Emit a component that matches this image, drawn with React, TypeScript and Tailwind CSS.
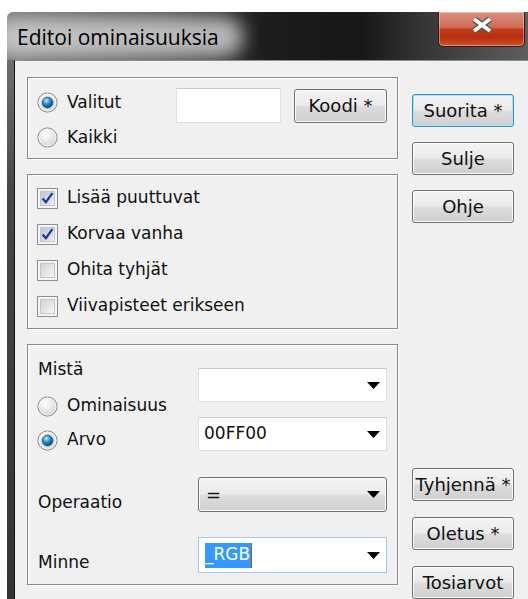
import type { ReactNode } from 'react';

// Windows 7 style "Editoi ominaisuuksia" dialog

const Radio = ({ id, checked }: { id: string; checked?: boolean }) => (
    <svg width="21" height="21" viewBox="0 0 21 21" className="shrink-0">
        <defs>
            <radialGradient id={`${id}-bg`} cx="40%" cy="35%" r="70%">
                <stop offset="0" stopColor="#ffffff" />
                <stop offset="1" stopColor="#d2d2d2" />
            </radialGradient>
            <radialGradient id={`${id}-dot`} cx="40%" cy="32%" r="70%">
                <stop offset="0" stopColor="#c4f0ff" />
                <stop offset="0.45" stopColor="#2a93da" />
                <stop offset="1" stopColor="#0a3d75" />
            </radialGradient>
        </defs>
        <circle cx="10.5" cy="10.5" r="9.6" fill={`url(#${id}-bg)`} stroke="#8a8a8a" />
        <circle cx="10.5" cy="10.5" r="8.4" fill="none" stroke="#f6f6f6" />
        {checked && <circle cx="10.5" cy="10.5" r="5.4" fill={`url(#${id}-dot)`} stroke="#1c4c77" strokeWidth="0.8" />}
    </svg>
);

const Checkbox = ({ id, checked }: { id: string; checked?: boolean }) => (
    <svg width="21" height="21" viewBox="0 0 21 21" className="shrink-0">
        <defs>
            <linearGradient id={`${id}-in`} x1="0" y1="0" x2="1" y2="1">
                <stop offset="0" stopColor={checked ? '#b9c3d3' : '#d0d0d0'} />
                <stop offset="1" stopColor={checked ? '#eef1f6' : '#f8f8f8'} />
            </linearGradient>
        </defs>
        <rect x="0.5" y="0.5" width="20" height="20" fill="#f5f5f5" stroke="#8e8f8f" />
        <rect x="3.5" y="3.5" width="14" height="14" fill={`url(#${id}-in)`} stroke="#c2c4c8" />
        {checked && <path d="M5.6 10.4 L8.9 14.2 L15.4 5.2" fill="none" stroke="#22398a" strokeWidth="2.3" />}
    </svg>
);

const Arrow = () => (
    <svg width="13" height="7" viewBox="0 0 13 7" className="shrink-0">
        <polygon points="0,0 13,0 6.5,7" fill="#000" />
    </svg>
);

const WinButton = ({ label, isDefault = false }: { label: string; isDefault?: boolean }) => (
    <button
        type="button"
        className={`flex h-[33px] w-[102px] items-center justify-center whitespace-nowrap rounded-[3px] border bg-[linear-gradient(180deg,#f3f3f3_0%,#ebebeb_48%,#dddddd_52%,#cfcfcf_100%)] text-[18px] leading-none text-[#111] ${
            isDefault ? 'border-[#3c8fc4] shadow-[inset_0_0_0_1px_#a6e3f9]' : 'border-[#707070] shadow-[inset_0_0_0_1px_#fbfbfb]'
        }`}
    >
        {label}
    </button>
);

const Group = ({ className, children }: { className: string; children: ReactNode }) => (
    <div className={`w-full border border-[#8a8a8a] shadow-[inset_1px_1px_0_#ffffff,1px_1px_0_#ffffff] ${className}`}>{children}</div>
);

const Row = ({ height, children }: { height: string; children: ReactNode }) => (
    <div className={`flex items-center gap-[9px] text-[17px] ${height}`}>{children}</div>
);

export default function App() {
    return (
        <div className="h-[599px] w-[528px] overflow-hidden bg-white pl-[7px] pt-[12px] font-['DejaVu_Sans',sans-serif] text-[#111]">
            <div className="flex h-[587px] flex-col">
                {/* title bar */}
                <div className="relative flex h-[48px] shrink-0 overflow-hidden rounded-tl-[6px] bg-[linear-gradient(90deg,#707070_0%,#4a4a4a_30%,#1c1c1c_50%,#171717_68%,#3a3a3a_82%,#5e5e5e_100%)]">
                    <div className="absolute left-[-14px] top-[5px] h-[40px] w-[250px] rounded-full bg-[#dadada] opacity-80 blur-[9px]" />
                    <span className="relative ml-[10px] mt-[12px] h-[26px] font-['Open_Sans',sans-serif] text-[21px] leading-[26px] text-black">
                        Editoi ominaisuuksia
                    </span>
                    <button
                        type="button"
                        className="relative ml-auto mr-[3px] flex h-[35px] w-[87px] justify-center rounded-b-[5px] border border-t-0 border-[#3a1710] bg-[linear-gradient(180deg,#dc9180_0%,#cf6b55_45%,#c0391b_52%,#b5300f_75%,#d2502a_100%)] pt-[5px] shadow-[inset_0_0_0_1px_rgba(255,255,255,0.35)]"
                    >
                        <svg width="24" height="16" viewBox="0 0 24 16">
                            <path d="M4 2 L20 14 M20 2 L4 14" stroke="#4d4d4d" strokeWidth="6" />
                            <path d="M4 2 L20 14 M20 2 L4 14" stroke="#ffffff" strokeWidth="3.8" />
                        </svg>
                    </button>
                </div>

                <div className="flex flex-1">
                    <div className="w-[7px] bg-[linear-gradient(180deg,#6e6e6e_0%,#474747_25%,#333333_100%)]" />
                    <div className="flex flex-1 gap-[14px] border-l border-t border-l-[#111111] border-t-[#8d8d8d] bg-[#f0f0f0] pl-[12px] pt-[16px]">
                        {/* left column: group boxes */}
                        <div className="flex w-[371px] flex-col gap-[15px]">
                            <Group className="flex h-[82px] pl-[9px] pt-[7px]">
                                <div className="w-[139px]">
                                    <Row height="h-[35px]">
                                        <Radio id="r-valitut" checked />
                                        <span>Valitut</span>
                                    </Row>
                                    <Row height="h-[35px]">
                                        <Radio id="r-kaikki" />
                                        <span>Kaikki</span>
                                    </Row>
                                </div>
                                <div className="mt-[3px] h-[35px] w-[105px] border border-[#dcdfe5] border-t-[#c9ccd2] bg-white" />
                                <div className="ml-[13px] mt-[4px]">
                                    <button
                                        type="button"
                                        className="flex h-[34px] w-[93px] items-center justify-center rounded-[3px] border border-[#707070] bg-[linear-gradient(180deg,#f3f3f3_0%,#ebebeb_48%,#dddddd_52%,#cfcfcf_100%)] text-[18px] leading-none shadow-[inset_0_0_0_1px_#fbfbfb]"
                                    >
                                        Koodi *
                                    </button>
                                </div>
                            </Group>

                            <Group className="h-[155px] pl-[9px] pt-[5px]">
                                <Row height="h-[36px]">
                                    <Checkbox id="c-lisaa" checked />
                                    <span>Lisää puuttuvat</span>
                                </Row>
                                <Row height="h-[36px]">
                                    <Checkbox id="c-korvaa" checked />
                                    <span>Korvaa vanha</span>
                                </Row>
                                <Row height="h-[36px]">
                                    <Checkbox id="c-ohita" />
                                    <span>Ohita tyhjät</span>
                                </Row>
                                <Row height="h-[36px]">
                                    <Checkbox id="c-viiva" />
                                    <span>Viivapisteet erikseen</span>
                                </Row>
                            </Group>

                            <Group className="flex h-[241px]">
                                <div className="flex w-[170px] flex-col pl-[9px] text-[17px]">
                                    <div className="ml-px mt-[14px] h-[20px] leading-[20px]">Mistä</div>
                                    <div className="mt-[10px]">
                                        <Row height="h-[34px]">
                                            <Radio id="r-omin" />
                                            <span>Ominaisuus</span>
                                        </Row>
                                        <Row height="h-[34px]">
                                            <Radio id="r-arvo" checked />
                                            <span>Arvo</span>
                                        </Row>
                                    </div>
                                    <div className="ml-px mt-[35px] h-[20px] leading-[20px]">Operaatio</div>
                                    <div className="ml-px mt-[40px] h-[20px] leading-[20px]">Minne</div>
                                </div>

                                <div className="flex w-[189px] flex-col text-[17px]">
                                    <div className="mt-[23px] flex h-[34px] items-center justify-end border border-[#dcdfe5] border-t-[#c9ccd2] bg-white pr-[6px]">
                                        <Arrow />
                                    </div>
                                    <div className="mt-[15px] flex h-[34px] items-center justify-between border border-[#dcdfe5] border-t-[#c9ccd2] bg-white pl-[5px] pr-[6px]">
                                        <span>00FF00</span>
                                        <Arrow />
                                    </div>
                                    <div className="mt-[26px] flex h-[35px] items-center justify-between rounded-[3px] border border-[#707070] bg-[linear-gradient(180deg,#f3f3f3_0%,#ebebeb_48%,#dddddd_52%,#cfcfcf_100%)] pl-[7px] pr-[6px] shadow-[inset_0_0_0_1px_#fbfbfb]">
                                        <span className="text-[18px]">=</span>
                                        <Arrow />
                                    </div>
                                    <div className="mt-[25px] flex h-[36px] items-center justify-between border border-[#a9c8ec] bg-white pl-[6px] pr-[6px]">
                                        <span className="flex h-[25px] items-center border-r border-r-[#a0521c] bg-[#3399ff] pr-px text-white">_RGB</span>
                                        <Arrow />
                                    </div>
                                </div>
                            </Group>
                        </div>

                        {/* right column: command buttons */}
                        <div className="flex w-[102px] flex-col justify-between">
                            <div className="mt-[17px] flex flex-col gap-[15px]">
                                <WinButton label="Suorita *" isDefault />
                                <WinButton label="Sulje" />
                                <WinButton label="Ohje" />
                            </div>
                            <div className="flex flex-col gap-[16px]">
                                <WinButton label="Tyhjennä *" />
                                <WinButton label="Oletus *" />
                                <WinButton label="Tosiarvot" />
                            </div>
                        </div>
                    </div>
                </div>
            </div>
        </div>
    );
}
